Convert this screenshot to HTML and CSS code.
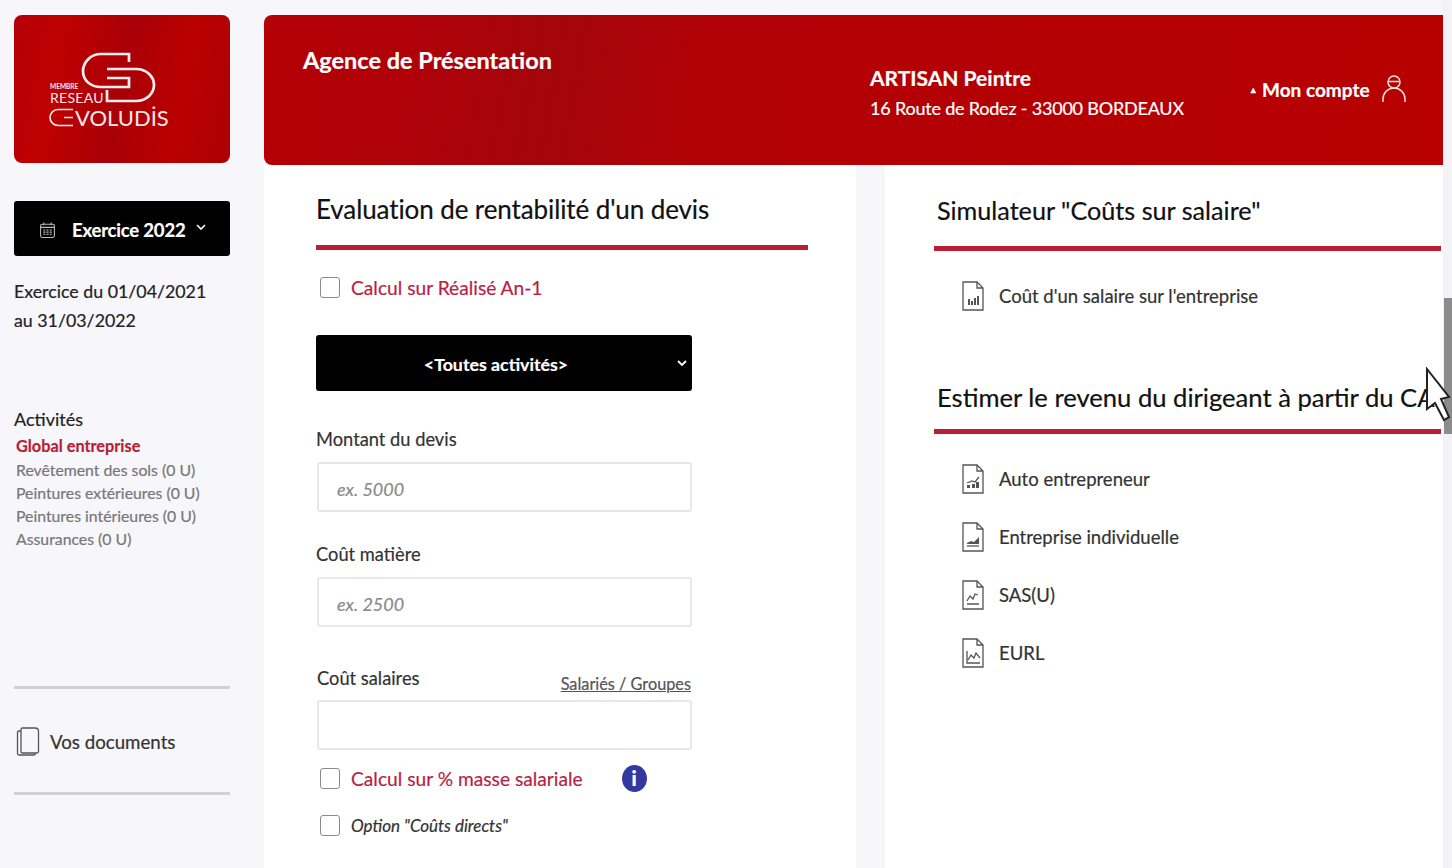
FILE: index.html
```html
<!DOCTYPE html>
<html lang="fr">
<head>
    <meta charset="UTF-8">
    <meta name="viewport" content="width=device-width, initial-scale=1.0">
    <title>Agence de Présentation</title>
    <link rel="stylesheet" href="styles.css">
</head>
<body>
    <div class="page">
        <!-- Colonne de gauche -->
        <aside class="sidebar">
            <div class="logo">
                <svg viewBox="0 0 216 148" width="216" height="148">
                    <g fill="none" stroke="#fbeeee" stroke-width="2.700">
                        <path d="M115 47V39H87C76 39 69 48 69 56C69 65 76 72 87 72H115V63H93"/>
                        <path d="M93 54H122C133 54 140 62 140 70C140 78 133 86 122 86H93V75"/>
                        <path d="M59 94.500H44A8 8 0 0 0 44 110.500H59M50 102.500H59" stroke-width="1.600"/>
                    </g>
                    <text x="36" y="74" class="logo-small">MEMBRE</text>
                    <text x="36" y="88" class="logo-mid">RESEAU</text>
                    <text x="61" y="111" class="logo-big">VOLUDİS</text>
                </svg>
            </div>
            <button class="year-button">
                <svg class="cal-icon" viewBox="0 0 16 16" width="17" height="18" fill="none" stroke="#bbb" stroke-width="1">
                    <rect x="1.500" y="2.500" width="13" height="12.500" rx="1.500"/>
                    <path d="M1.500 5.500H14.500M4.500 1V3.500M11.500 1V3.500M4 8H6M7 8H9M10 8H12M4 10H6M7 10H9M10 10H12M4 12H6M7 12H9M10 12H12"/>
                </svg>
                <span>Exercice 2022</span>
                <svg class="year-chevron" viewBox="0 0 10 6" width="10" height="6" fill="none" stroke="#fff" stroke-width="1.600"><path d="M1 1L5 5L9 1"/></svg>
            </button>
            <p class="year-dates">Exercice du 01/04/2021<br>au 31/03/2022</p>
            <h4 class="side-title">Activités</h4>
            <ul class="activity-list">
                <li class="active">Global entreprise</li>
                <li>Revêtement des sols (0 U)</li>
                <li>Peintures extérieures (0 U)</li>
                <li>Peintures intérieures (0 U)</li>
                <li>Assurances (0 U)</li>
            </ul>
            <div class="docs">
                <svg viewBox="0 0 24 30" width="24" height="30" fill="none" stroke="#555" stroke-width="1.300">
                    <path d="M5 2.500Q5 1 6.500 1H19Q22.500 1 22.500 4.500V24.500Q22.500 26 21 26H6.500Q5 26 5 24.500Z"/>
                    <path d="M5 4H3Q1.500 4 1.500 5.500V26.500Q1.500 28 3 28H18Q19.500 28 19.500 26"/>
                </svg>
                <span>Vos documents</span>
            </div>
        </aside>

        <main class="main">
            <header class="banner">
                <div class="agency">Agence de Présentation</div>
                <div class="company">
                    <strong>ARTISAN Peintre</strong>
                    <span>16 Route de Rodez - 33000 BORDEAUX</span>
                </div>
                <div class="account">
                    <span class="caret">▴</span>
                    <span>Mon compte</span>
                    <svg viewBox="0 0 26 30" width="26" height="30" fill="none" stroke="#f6e3e3" stroke-width="1.500">
                        <circle cx="13" cy="8" r="6"/>
                        <path d="M8 7.500H18M2 28V25A11 11 0 0 1 24 25V28"/>
                    </svg>
                </div>
            </header>

            <div class="panels">
                <!-- Devis -->
                <section class="panel panel-left">
                    <h2 class="panel-title">Evaluation de rentabilité d'un devis</h2>
                    <label class="check first-check"><input type="checkbox"><span class="red">Calcul sur Réalisé An-1</span></label>
                    <button class="activity-select">
                        <span>&lt;Toutes activités&gt;</span>
                        <svg viewBox="0 0 10 6" width="10" height="6" fill="none" stroke="#fff" stroke-width="1.800"><path d="M1 1L5 5L9 1"/></svg>
                    </button>
                    <div class="field field-one">
                        <label>Montant du devis</label>
                        <input type="text" placeholder="ex. 5000">
                    </div>
                    <div class="field">
                        <label>Coût matière</label>
                        <input type="text" placeholder="ex. 2500">
                    </div>
                    <div class="field field-salary">
                        <div class="label-row">
                            <label>Coût salaires</label>
                            <a href="#">Salariés / Groupes</a>
                        </div>
                        <input type="text">
                    </div>
                    <label class="check mass-check">
                        <input type="checkbox">
                        <span class="red">Calcul sur % masse salariale</span>
                        <span class="info">i</span>
                    </label>
                    <label class="check direct-check"><input type="checkbox"><em>Option "Coûts directs"</em></label>
                </section>

                <!-- Simulateurs -->
                <section class="panel panel-right">
                    <h2 class="panel-title first-title">Simulateur "Coûts sur salaire"</h2>
                    <ul class="sim-list">
                        <li>
                            <svg class="doc-icon" viewBox="0 0 22 30" width="22" height="30"><path class="doc-line" d="M1 1H15L21 7V29H1ZM15 1V7H21"/><path class="doc-fill" d="M6 24V18H8V24ZM9 24V20H11V24ZM12 24V17H14V24ZM15 24V15H17V24Z"/></svg>
                            <span>Coût d'un salaire sur l'entreprise</span>
                        </li>
                    </ul>
                    <h2 class="panel-title second-title">Estimer le revenu du dirigeant à partir du CA</h2>
                    <ul class="sim-list">
                        <li>
                            <svg class="doc-icon" viewBox="0 0 22 30" width="22" height="30"><path class="doc-line" d="M1 1H15L21 7V29H1ZM15 1V7H21"/><path class="doc-fill" d="M5 24V21H8V24ZM10 24V20H13V24ZM14 24V18H17V24Z"/><path class="doc-thin" d="M5 19L10 17L13 18L17 13"/></svg>
                            <span>Auto entrepreneur</span>
                        </li>
                        <li>
                            <svg class="doc-icon" viewBox="0 0 22 30" width="22" height="30"><path class="doc-line" d="M1 1H15L21 7V29H1ZM15 1V7H21"/><path class="doc-fill" d="M5 21L9 19L12 20L17 15V22H5Z"/><path class="doc-thin" d="M5 24H17"/></svg>
                            <span>Entreprise individuelle</span>
                        </li>
                        <li>
                            <svg class="doc-icon" viewBox="0 0 22 30" width="22" height="30"><path class="doc-line" d="M1 1H15L21 7V29H1ZM15 1V7H21"/><path class="doc-thin" d="M5 21L8 16L11 19L13 14L16 15M5 24H17"/></svg>
                            <span>SAS(U)</span>
                        </li>
                        <li>
                            <svg class="doc-icon" viewBox="0 0 22 30" width="22" height="30"><path class="doc-line" d="M1 1H15L21 7V29H1ZM15 1V7H21"/><path class="doc-thin" d="M5 13V25H18M6 22L9 17L12 20L14 15L18 20"/></svg>
                            <span>EURL</span>
                        </li>
                    </ul>
                </section>
            </div>
        </main>
    </div>

    <div class="scroll-track"><div class="scroll-thumb"></div></div>

    <!-- Curseur de la souris -->
    <svg class="mouse" viewBox="0 0 27 56" width="27" height="56">
        <path d="M2 2L24 30L16 32L24 50L19 53L10 36L2 42Z" fill="#fff" stroke="#222" stroke-width="2"/>
    </svg>
</body>
</html>
```

FILE: styles.css
```css
* {
    box-sizing: border-box;
}

body {
    margin: 0;
    height: 868px;
    overflow: hidden;
    background-color: #f7f6fb;
    font-family: 'Lato', 'Liberation Sans', sans-serif;
    color: #333;
    -webkit-text-stroke: 0.2px;
}

.page {
    display: flex;
    padding: 15px 9px 0 14px;
    gap: 34px;
}

/* Colonne de gauche */
.sidebar {
    width: 216px;
    flex-shrink: 0;
}

.logo {
    height: 148px;
    border-radius: 8px;
    overflow: hidden;
    background: linear-gradient(100deg, #b30008 0%, #c00000 20%, #a80008 50%, #bb0000 75%, #ad0005 100%);
}

.logo svg {
    display: block;
}

.logo text {
    font-family: 'Lato', sans-serif;
    fill: #fbe9e9;
    -webkit-text-stroke: 0;
}

.logo-small {
    font-size: 6.500px;
    font-weight: 700;
}

.logo-mid {
    font-size: 14px;
    letter-spacing: 0.3px;
}

.logo-big {
    font-size: 22px;
}

.year-button {
    display: flex;
    align-items: center;
    width: 216px;
    height: 55px;
    margin-top: 38px;
    padding: 2px 0 0 25px;
    background: #000;
    color: #fff;
    border: none;
    border-radius: 3px;
    font-family: inherit;
    font-size: 18.500px;
    font-weight: 700;
}

.year-button span {
    margin: 0 11px 0 16px;
    letter-spacing: -0.2px;
}

.year-chevron {
    margin-top: -5px;
}

.year-dates {
    margin: 21px 0 0;
    font-size: 17.800px;
    line-height: 29px;
    color: #222;
}

.side-title {
    margin: 71px 0 0;
    font-size: 18px;
    line-height: 26px;
    font-weight: 400;
    color: #222;
}

.activity-list {
    list-style-type: none;
    margin: 2px 0 0 2px;
    padding: 0;
    font-size: 15.800px;
    line-height: 23px;
    color: #777;
}

.activity-list .active {
    color: #b81f35;
    font-size: 16.300px;
    font-weight: 700;
    margin-bottom: 1px;
}

.docs {
    display: flex;
    align-items: center;
    gap: 10px;
    height: 109px;
    margin-top: 136px;
    padding: 2px 0 0 2px;
    border-top: 3px solid #d2d2d4;
    border-bottom: 3px solid #d2d2d4;
    font-size: 18.700px;
    color: #333;
}

/* Bandeau */
.main {
    flex: 1;
    min-width: 0;
}

.banner {
    display: flex;
    height: 150px;
    border-radius: 8px 0 0 8px;
    background: linear-gradient(100deg, #b40006 0%, #b00008 12%, #a3060a 25%, #b10006 38%, #b80000 100%);
    color: #fff;
}

.agency {
    width: 606px;
    padding: 31px 0 0 39px;
    font-size: 23.500px;
    font-weight: 700;
}

.company {
    display: flex;
    flex-direction: column;
    width: 381px;
    padding-top: 47px;
}

.company strong {
    font-size: 21px;
    line-height: 31px;
    margin-bottom: 1px;
}

.company span {
    font-size: 18px;
    line-height: 28px;
    letter-spacing: -0.2px;
    white-space: nowrap;
}

.account {
    display: flex;
    align-items: center;
    height: 148px;
    font-size: 19px;
    font-weight: 700;
    white-space: nowrap;
}

.caret {
    font-size: 9px;
    margin-right: 6px;
}

.account svg {
    margin-left: 11px;
}

/* Panneaux */
.panels {
    display: flex;
    gap: 29px;
}

.panel {
    height: 704px;
    background: #fff;
}

.panel-left {
    width: 592px;
    padding: 0 0 0 52px;
}

.panel-right {
    flex: 1;
    min-width: 0;
    padding: 0 2px 0 49px;
}

.panel-title {
    height: 86px;
    margin: 0;
    padding: 27px 0 0 0;
    border-bottom: 5px solid #b81f35;
    font-size: 25.600px;
    line-height: 36px;
    font-weight: 400;
    color: #111;
    white-space: nowrap;
}

.panel-left .panel-title {
    width: 492px;
    height: 85px;
    padding-top: 26px;
    font-size: 26px;
    letter-spacing: -0.1px;
}

.panel-right .panel-title {
    padding-left: 3px;
}

.panel-right .first-title {
    font-size: 25.200px;
}

.panel-right .second-title {
    margin-top: 48px;
    height: 75px;
    padding-top: 20px;
}

.check {
    display: flex;
    align-items: center;
    gap: 11px;
    padding-left: 4px;
    font-size: 19.200px;
}

.check input {
    appearance: none;
    width: 20px;
    height: 21px;
    margin: 0;
    background: #fff;
    border: 1px solid #8b8b8b;
    border-radius: 3px;
}

.red {
    color: #b81f45;
}

.first-check {
    margin-top: 26px;
}

.activity-select {
    position: relative;
    display: block;
    width: 376px;
    height: 56px;
    margin-top: 36px;
    padding: 2px 16px 0 0;
    background: #000;
    color: #fff;
    border: none;
    border-radius: 3px;
    font-family: inherit;
    font-size: 17.800px;
    font-weight: 700;
}

.activity-select svg {
    position: absolute;
    right: 5px;
    top: 25px;
}

.field label {
    display: block;
    font-size: 18.300px;
    line-height: 24px;
    color: #333;
}

.field input {
    display: block;
    width: 375px;
    height: 50px;
    margin: 11px 0 0 1px;
    padding: 3px 18px 0;
    background: #fff;
    border: 2px solid #e8e8ea;
    border-radius: 3px;
    font-family: inherit;
    font-size: 18px;
    font-style: italic;
}

.field input::placeholder {
    color: #8a8a8a;
}

.field {
    margin-top: 30px;
}

.field-one {
    margin-top: 36px;
}

.field-salary {
    margin-top: 39px;
}

.label-row {
    display: flex;
    justify-content: space-between;
    align-items: flex-end;
    width: 375px;
    margin-left: 1px;
}

.field-salary input {
    margin-top: 10px;
}

.label-row a {
    color: #555;
    font-size: 16.300px;
    margin: 0 1px -3px 0;
}

.mass-check {
    margin-top: 15px;
}

.info {
    width: 25px;
    height: 27px;
    margin-left: 28px;
    border-radius: 50%;
    background: #3338a0;
    color: #fff;
    font-size: 20px;
    line-height: 27px;
    font-weight: 900;
    text-align: center;
}

.direct-check {
    margin-top: 23px;
    font-size: 17px;
    color: #333;
}

/* Listes du simulateur */
.sim-list {
    list-style-type: none;
    margin: 0;
    padding: 0 0 0 28px;
}

.sim-list li {
    display: flex;
    align-items: center;
    gap: 15px;
    height: 30px;
    margin-top: 28px;
    font-size: 18.500px;
    color: #333;
}

.sim-list li:first-child {
    margin-top: 30px;
}

.doc-icon {
    flex-shrink: 0;
}

.doc-line {
    fill: #fff;
    stroke: #555;
    stroke-width: 1.300;
}

.doc-fill {
    fill: #555;
}

.doc-thin {
    fill: none;
    stroke: #555;
    stroke-width: 1.300;
}

/* Barre de défilement */
.scroll-track {
    position: absolute;
    top: 0;
    right: 0;
    width: 9px;
    height: 868px;
    background: #f3f3f6;
}

.scroll-thumb {
    width: 8px;
    height: 136px;
    margin: 298px 0 0 1px;
    background: #8c8c8c;
}

.mouse {
    position: absolute;
    left: 1425px;
    top: 367px;
}
```
